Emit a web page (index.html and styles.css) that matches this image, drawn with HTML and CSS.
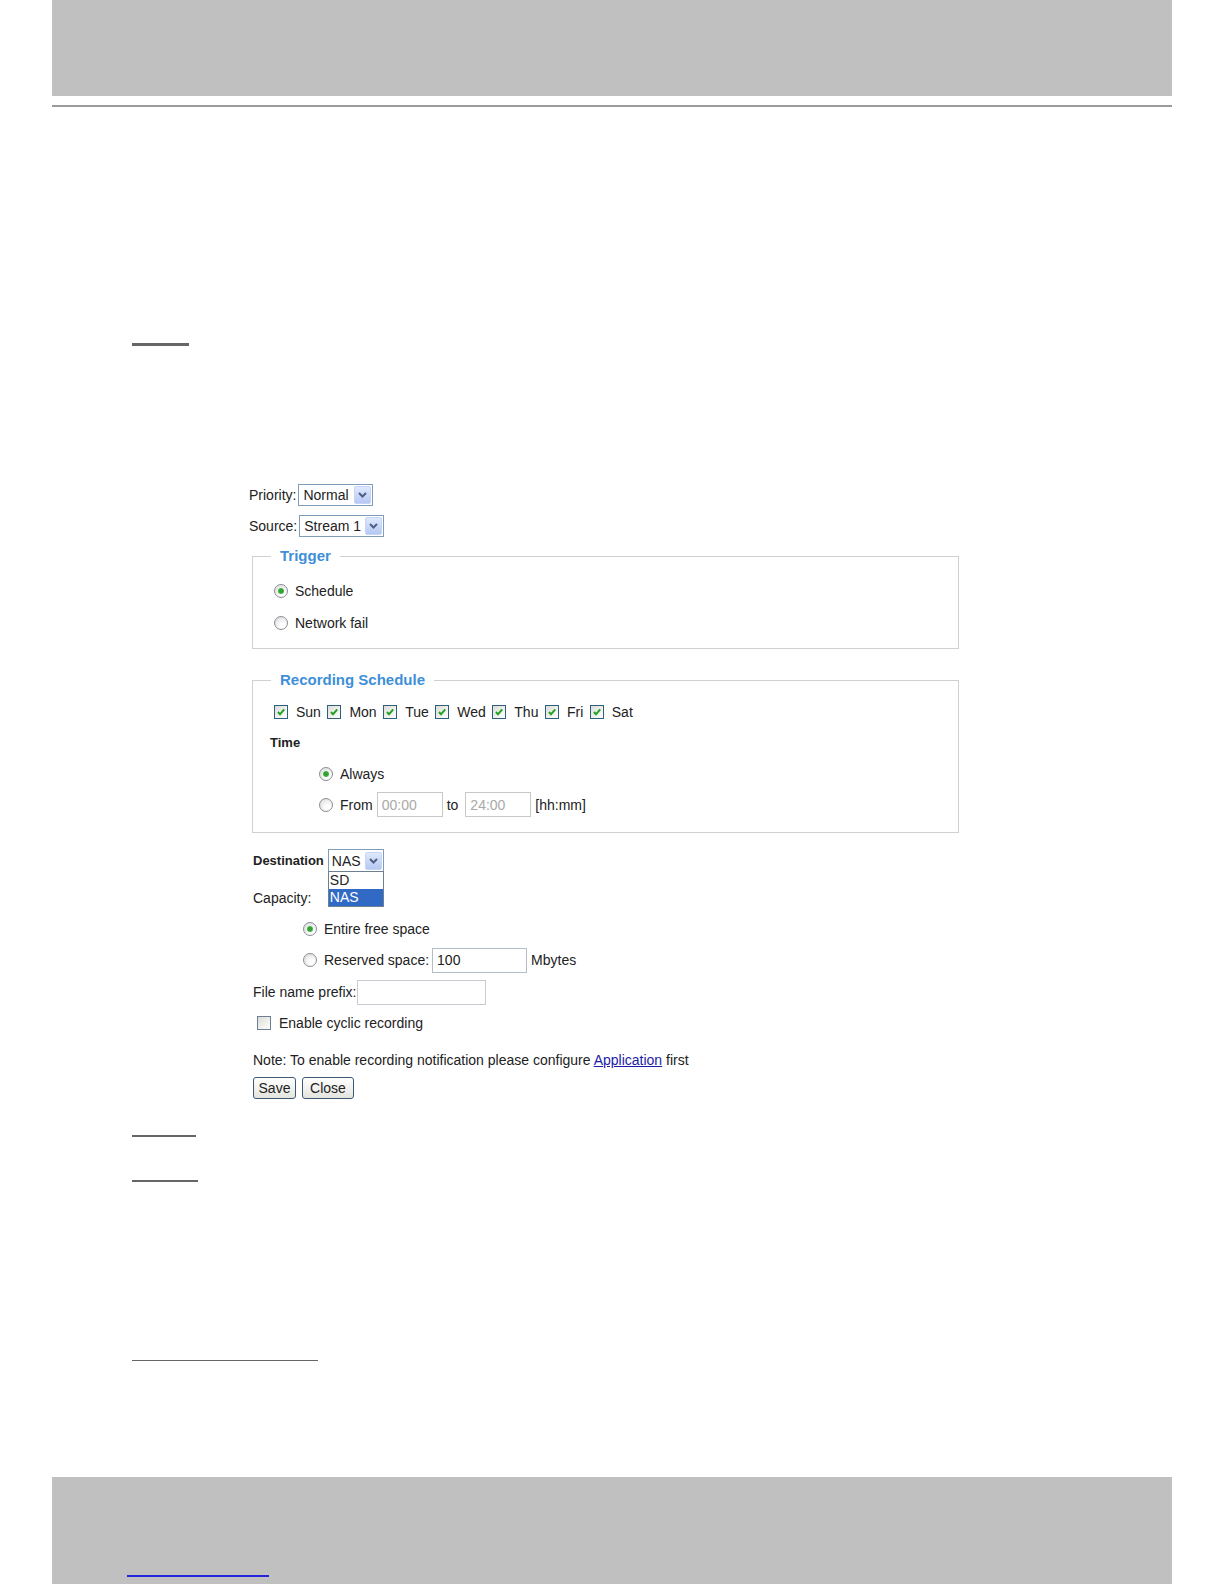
FILE: index.html
```html
<!DOCTYPE html>
<html>
<head>
    <meta charset="utf-8" />
    <title>Recording settings</title>
    <link rel="stylesheet" href="styles.css">
</head>
<body>
    <div class="page">
        <div class="header"></div>
        <div class="rule"></div>

        <div class="content">
            <div class="mark"></div>

            <form class="rec-form">
                <div class="row">
                    <span class="lbl">Priority:</span>
                    <div class="select select-priority">
                        <span>Normal</span>
                        <span class="arrow"><svg viewBox="0 0 9 6"><path d="M1 1l3.5 3.5L8 1" /></svg></span>
                    </div>
                </div>
                <div class="row">
                    <span class="lbl">Source:</span>
                    <div class="select select-source">
                        <span>Stream 1</span>
                        <span class="arrow"><svg viewBox="0 0 9 6"><path d="M1 1l3.5 3.5L8 1" /></svg></span>
                    </div>
                </div>

                <fieldset class="group group-trigger">
                    <legend>Trigger</legend>
                    <div class="opt"><span class="radio on"></span><span>Schedule</span></div>
                    <div class="opt"><span class="radio"></span><span>Network fail</span></div>
                </fieldset>

                <fieldset class="group group-schedule">
                    <legend>Recording Schedule</legend>
                    <div class="days">
                        <span class="day"><span class="check"><svg viewBox="0 0 12 12"><path d="M3 6l2 2.3 4.2-5" /></svg></span>Sun</span>
                        <span class="day"><span class="check"><svg viewBox="0 0 12 12"><path d="M3 6l2 2.3 4.2-5" /></svg></span>Mon</span>
                        <span class="day"><span class="check"><svg viewBox="0 0 12 12"><path d="M3 6l2 2.3 4.2-5" /></svg></span>Tue</span>
                        <span class="day"><span class="check"><svg viewBox="0 0 12 12"><path d="M3 6l2 2.3 4.2-5" /></svg></span>Wed</span>
                        <span class="day"><span class="check"><svg viewBox="0 0 12 12"><path d="M3 6l2 2.3 4.2-5" /></svg></span>Thu</span>
                        <span class="day"><span class="check"><svg viewBox="0 0 12 12"><path d="M3 6l2 2.3 4.2-5" /></svg></span>Fri</span>
                        <span class="day"><span class="check"><svg viewBox="0 0 12 12"><path d="M3 6l2 2.3 4.2-5" /></svg></span>Sat</span>
                    </div>
                    <div class="sched-row"><b class="time-label">Time</b></div>
                    <div class="sched-row sched-opt"><span class="radio on"></span><span>Always</span></div>
                    <div class="sched-row sched-opt">
                        <span class="radio"></span><span>From</span>
                        <input class="field field-time" type="text" value="00:00">
                        <span class="to">to</span>
                        <input class="field field-time" type="text" value="24:00">
                        <span class="unit">[hh:mm]</span>
                    </div>
                </fieldset>

                <div class="lower">
                    <div class="row row-dest">
                        <b class="dest-label">Destination</b>
                        <div class="select select-dest">
                            <span>NAS</span>
                            <span class="arrow"><svg viewBox="0 0 9 6"><path d="M1 1l3.5 3.5L8 1" /></svg></span>
                            <ul class="droplist">
                                <li>SD</li>
                                <li class="sel">NAS</li>
                            </ul>
                        </div>
                    </div>
                    <div class="row row-cap"><span>Capacity:</span></div>
                    <div class="cap-opt cap-entire"><span class="radio on"></span><span>Entire free space</span></div>
                    <div class="cap-opt cap-reserved">
                        <span class="radio"></span><span>Reserved space:</span>
                        <input class="field field-reserved" type="text" value="100">
                        <span class="unit">Mbytes</span>
                    </div>
                    <div class="row row-prefix">
                        <span>File name prefix:</span>
                        <input class="field field-prefix" type="text" value="">
                    </div>
                    <div class="row row-cyclic">
                        <span class="check check-off"></span><span>Enable cyclic recording</span>
                    </div>
                    <p class="note">Note: To enable recording notification please configure <a href="#">Application</a> first</p>
                    <div class="buttons">
                        <button type="button" class="btn btn-save">Save</button>
                        <button type="button" class="btn btn-close">Close</button>
                    </div>
                </div>
            </form>

            <div class="mark mark-2"></div>
            <div class="mark mark-3"></div>
            <div class="foot-rule"></div>
        </div>

        <div class="footer">
            <span class="footer-link"></span>
        </div>
    </div>
</body>
</html>
```

FILE: styles.css
```css
html, body {
    margin: 0;
    background: #fff;
    font-family: "Liberation Sans", Arial, sans-serif;
    font-size: 14px;
    color: #222;
}

.page {
    margin: 0 52px;
}

.header {
    height: 96px;
    background: #c0c0c0;
}

.rule {
    height: 2px;
    margin-top: 9px;
    background: #9b9b9b;
}

.content {
    padding-left: 80px;
}

.mark {
    width: 57px;
    height: 3px;
    margin-top: 236px;
    background: #666;
}

.mark-2 {
    width: 64px;
    height: 2px;
    margin-top: 36px;
}

.mark-3 {
    width: 66px;
    height: 2px;
    margin-top: 43px;
}

.foot-rule {
    width: 186px;
    height: 1px;
    margin-top: 178px;
    background: #666;
}

.footer {
    height: 107px;
    margin-top: 116px;
    padding: 98px 0 0 75px;
    box-sizing: border-box;
    background: #c0c0c0;
}

.footer-link {
    display: block;
    width: 142px;
    height: 2px;
    background: #2424d8;
}

/* form */
.rec-form {
    margin: 133px 0 0 117px;
    width: 712px;
}

.row {
    display: flex;
    align-items: center;
    height: 31px;
}

.lbl {
    margin-right: 2px;
}

.select {
    position: relative;
    display: flex;
    align-items: center;
    justify-content: space-between;
    box-sizing: border-box;
    height: 22px;
    padding: 0 1px 0 4px;
    border: 1px solid #7f9db9;
    background: #fff;
}

.select-priority { width: 75px; }
.select-source { width: 85px; }
.select-dest { width: 56px; height: 24px; padding-left: 3px; }

.arrow {
    display: flex;
    align-items: center;
    justify-content: center;
    box-sizing: border-box;
    width: 17px;
    height: 18px;
    border: 1px solid #c6d5f7;
    border-radius: 2px;
    background: linear-gradient(#dfe8fc, #b5c8f3);
}

.arrow svg {
    width: 9px;
    height: 6px;
}

.arrow path {
    fill: none;
    stroke: #4d6185;
    stroke-width: 2;
}

.droplist {
    position: absolute;
    left: -1px;
    top: calc(100% - 1px);
    width: 56px;
    box-sizing: border-box;
    margin: 0;
    padding: 0;
    list-style: none;
    border: 1px solid #6f7f92;
    background: #fff;
}

.droplist li {
    height: 17px;
    line-height: 17px;
    padding-left: 1px;
}

.droplist .sel {
    background: #316ac5;
    color: #fff;
}

.group {
    width: 707px;
    box-sizing: border-box;
    margin: 0 0 0 3px;
    padding: 0 18px;
    border: 1px solid #d0d0d0;
}

.group legend {
    padding: 0 9px;
    color: #3e8fd8;
    font-size: 15px;
    font-weight: bold;
    line-height: 18px;
}

.group-trigger {
    margin-top: 6px;
    padding-top: 10px;
    padding-bottom: 9px;
}

.group-schedule {
    margin-top: 22px;
    padding-top: 7px;
    padding-bottom: 12px;
}

.opt {
    display: flex;
    align-items: center;
    height: 32px;
    padding-left: 3px;
}

.radio {
    display: inline-flex;
    align-items: center;
    justify-content: center;
    box-sizing: border-box;
    width: 14px;
    height: 14px;
    margin-right: 7px;
    border: 1px solid #8b8e92;
    border-radius: 50%;
    background: radial-gradient(circle at 65% 70%, #fff 20%, #d6d6d6);
}

.radio.on::after {
    content: '';
    width: 6px;
    height: 6px;
    border-radius: 50%;
    background: radial-gradient(circle, #2fa52f 45%, #8fd08f);
}

.check {
    display: inline-flex;
    align-items: center;
    justify-content: center;
    box-sizing: border-box;
    width: 14px;
    height: 14px;
    margin: 0 8px 0 3px;
    border: 1px solid #2f5f7f;
    background: linear-gradient(135deg, #dcdcd6, #fff);
}

.check svg {
    width: 12px;
    height: 12px;
}

.check path {
    fill: none;
    stroke: #21a121;
    stroke-width: 2;
}

.days {
    display: flex;
    align-items: center;
    height: 31px;
}

.day {
    display: flex;
    align-items: center;
    margin-right: 3.5px;
}

.sched-row {
    display: flex;
    align-items: center;
    height: 31px;
}

.time-label {
    margin-left: -1px;
    font-size: 13px;
}

.sched-opt {
    padding-left: 48px;
}

.field {
    box-sizing: border-box;
    height: 25px;
    margin: 0;
    padding: 0 4px;
    border: 1px solid #b4bcc7;
    background: #fff;
    color: #222;
    font: 14px "Liberation Sans", Arial, sans-serif;
}

.field-time {
    width: 66px;
    margin-left: 4px;
    border-color: #c8c8c8;
    color: #a9a9a9;
}

.to {
    margin: 0 3px 0 4px;
}

.unit {
    margin-left: 4px;
}

.lower {
    padding-left: 4px;
}

.row-dest {
    margin-top: 12px;
}

.dest-label {
    margin-right: 4px;
    font-size: 13px;
}

.row-cap {
    margin-top: 6px;
}

.cap-opt {
    display: flex;
    align-items: center;
    padding-left: 50px;
}

.cap-entire { height: 32px; }
.cap-reserved { height: 30px; }

.field-reserved {
    width: 95px;
    margin-left: 3px;
}

.row-prefix {
    height: 32px;
    margin-top: 1px;
}

.field-prefix {
    width: 129px;
    margin-left: 1px;
    border-color: #c8ccd2;
}

.row-cyclic {
    height: 30px;
}

.check-off {
    margin: 0 8px 0 4px;
    border-color: #6c7f92;
}

.note {
    height: 30px;
    margin: 7px 0 0;
    line-height: 30px;
}

.note a {
    color: #1c1ca6;
}

.buttons {
    display: flex;
    gap: 6px;
    margin-top: 2px;
}

.btn {
    box-sizing: border-box;
    height: 22px;
    padding: 0;
    border: 1px solid #3c5a78;
    border-radius: 3px;
    background: linear-gradient(#fff, #e4e4de);
    color: #222;
    font: 14px "Liberation Sans", Arial, sans-serif;
}

.btn-save { width: 43px; }
.btn-close { width: 52px; }
```
